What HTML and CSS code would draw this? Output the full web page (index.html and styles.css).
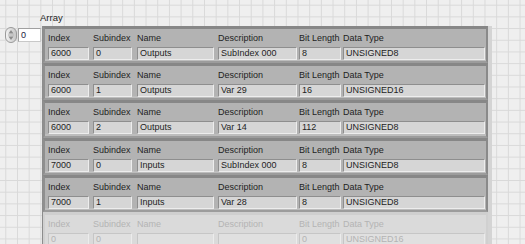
FILE: index.html
```html
<!DOCTYPE html>
<html>
<head>
<meta charset="utf-8">
<link rel="stylesheet" href="styles.css">
</head>
<body>
<div class="panel">
  <div class="array-label">Array</div>
  <div class="array-row">
    <div class="index-ctl">
      <div class="spin">
        <svg width="12" height="16" viewBox="0 0 12 16">
          <defs>
            <linearGradient id="sg" x1="0" y1="0" x2="1" y2="0">
              <stop offset="0" stop-color="#f4f4f4"/>
              <stop offset="1" stop-color="#c4c4c4"/>
            </linearGradient>
          </defs>
          <rect x="0.5" y="0.5" width="11" height="15" rx="5.5" ry="5.5" fill="url(#sg)" stroke="#9a9a9a"/>
          <path d="M6 3 L8.5 6.5 L3.5 6.5 Z" fill="#8a8a8a"/>
          <path d="M6 13 L8.5 9.5 L3.5 9.5 Z" fill="#8a8a8a"/>
          <line x1="3" y1="8" x2="9" y2="8" stroke="#b0b0b0" stroke-width="1"/>
        </svg>
      </div>
      <div class="idx-box">0</div>
    </div>
    <div class="array-frame">
      <div class="cluster">
        <div class="field f-index"><div class="lbl">Index</div><div class="val">6000</div></div>
        <div class="field f-sub"><div class="lbl">Subindex</div><div class="val">0</div></div>
        <div class="field f-name"><div class="lbl">Name</div><div class="val">Outputs</div></div>
        <div class="field f-desc"><div class="lbl">Description</div><div class="val">SubIndex 000</div></div>
        <div class="field f-bit"><div class="lbl">Bit Length</div><div class="val">8</div></div>
        <div class="field f-type"><div class="lbl">Data Type</div><div class="val">UNSIGNED8</div></div>
      </div>
      <div class="cluster">
        <div class="field f-index"><div class="lbl">Index</div><div class="val">6000</div></div>
        <div class="field f-sub"><div class="lbl">Subindex</div><div class="val">1</div></div>
        <div class="field f-name"><div class="lbl">Name</div><div class="val">Outputs</div></div>
        <div class="field f-desc"><div class="lbl">Description</div><div class="val">Var 29</div></div>
        <div class="field f-bit"><div class="lbl">Bit Length</div><div class="val">16</div></div>
        <div class="field f-type"><div class="lbl">Data Type</div><div class="val">UNSIGNED16</div></div>
      </div>
      <div class="cluster">
        <div class="field f-index"><div class="lbl">Index</div><div class="val">6000</div></div>
        <div class="field f-sub"><div class="lbl">Subindex</div><div class="val">2</div></div>
        <div class="field f-name"><div class="lbl">Name</div><div class="val">Outputs</div></div>
        <div class="field f-desc"><div class="lbl">Description</div><div class="val">Var 14</div></div>
        <div class="field f-bit"><div class="lbl">Bit Length</div><div class="val">112</div></div>
        <div class="field f-type"><div class="lbl">Data Type</div><div class="val">UNSIGNED8</div></div>
      </div>
      <div class="cluster">
        <div class="field f-index"><div class="lbl">Index</div><div class="val">7000</div></div>
        <div class="field f-sub"><div class="lbl">Subindex</div><div class="val">0</div></div>
        <div class="field f-name"><div class="lbl">Name</div><div class="val">Inputs</div></div>
        <div class="field f-desc"><div class="lbl">Description</div><div class="val">SubIndex 000</div></div>
        <div class="field f-bit"><div class="lbl">Bit Length</div><div class="val">8</div></div>
        <div class="field f-type"><div class="lbl">Data Type</div><div class="val">UNSIGNED8</div></div>
      </div>
      <div class="cluster">
        <div class="field f-index"><div class="lbl">Index</div><div class="val">7000</div></div>
        <div class="field f-sub"><div class="lbl">Subindex</div><div class="val">1</div></div>
        <div class="field f-name"><div class="lbl">Name</div><div class="val">Inputs</div></div>
        <div class="field f-desc"><div class="lbl">Description</div><div class="val">Var 28</div></div>
        <div class="field f-bit"><div class="lbl">Bit Length</div><div class="val">8</div></div>
        <div class="field f-type"><div class="lbl">Data Type</div><div class="val">UNSIGNED8</div></div>
      </div>
      <div class="cluster faded">
        <div class="field f-index"><div class="lbl">Index</div><div class="val">0</div></div>
        <div class="field f-sub"><div class="lbl">Subindex</div><div class="val">0</div></div>
        <div class="field f-name"><div class="lbl">Name</div><div class="val"></div></div>
        <div class="field f-desc"><div class="lbl">Description</div><div class="val"></div></div>
        <div class="field f-bit"><div class="lbl">Bit Length</div><div class="val">0</div></div>
        <div class="field f-type"><div class="lbl">Data Type</div><div class="val">UNSIGNED16</div></div>
      </div>
    </div>
  </div>
</div>
</body>
</html>
```
FILE: styles.css
```css
html, body {
  margin: 0;
  padding: 0;
  width: 525px;
  height: 244px;
  overflow: hidden;
}
body {
  font-family: "Liberation Sans", Arial, sans-serif;
  font-size: 9px;
  color: #1e1e1e;
  background-color: #efefef;
  background-image:
    linear-gradient(to right, #d9d9d9 1px, transparent 1px),
    linear-gradient(to bottom, #d9d9d9 1px, transparent 1px);
  background-size: 11.7px 11.7px;
  background-position: 5.3px 4.7px;
}
.panel {
  padding-top: 11px;
}
.array-label {
  margin-left: 40px;
  height: 15px;
  line-height: 13px;
  font-size: 9.5px;
}
.array-row {
  display: flex;
  align-items: flex-start;
}
.index-ctl {
  display: flex;
  align-items: center;
  margin-left: 5px;
  margin-top: 1px;
  width: 36px;
}
.spin {
  width: 12px;
  height: 16px;
}
.spin svg {
  display: block;
}
.idx-box {
  margin-left: 1px;
  width: 19px;
  height: 12px;
  line-height: 12px;
  background: #ffffff;
  border: 1px solid #c8c8c8;
  border-top-color: #a0a0a0;
  border-left-color: #a0a0a0;
  padding-left: 2px;
  box-sizing: content-box;
  color: #202040;
}
.array-frame {
  margin-left: 1px;
  width: 445px;
  border-left: 1px solid #8c8c8c;
  border-right: 4px solid #d4d4d4;
  background: #a8a8a8;
}
.cluster {
  display: flex;
  box-sizing: border-box;
  height: 37.2px;
  padding-left: 3px;
  background: #b3b3b3;
  border-top: 3px solid #878787;
  border-left: 2px solid #8f8f8f;
  border-right: 2px solid #8a8a8a;
  border-bottom: 2px solid #9c9c9c;
  box-shadow: inset 0 -2px 0 #bdbdbd;
}
.field {
  display: flex;
  flex-direction: column;
}
.lbl {
  height: 18px;
  line-height: 18px;
  white-space: nowrap;
}
.val {
  box-sizing: border-box;
  height: 13px;
  line-height: 11px;
  padding-left: 2px;
  background: #d6d6d6;
  border: 1px solid #ededed;
  border-top-color: #8e8e8e;
  border-left-color: #8e8e8e;
  white-space: nowrap;
  overflow: hidden;
}
.f-index { width: 45px; }
.f-index .val { width: 41px; }
.f-sub { width: 44px; }
.f-sub .val { width: 39px; }
.f-name { width: 81px; }
.f-name .val { width: 77px; }
.f-desc { width: 81px; }
.f-desc .val { width: 79px; }
.f-bit { width: 44px; }
.f-bit .val { width: 42px; }
.f-type { width: 142px; }
.f-type .val { width: 142px; }

.cluster.faded {
  background: #dadada;
  border-top-color: #cfcfcf;
  border-left-color: #d0d0d0;
  border-right-color: #d0d0d0;
  color: #b4b4b4;
  box-shadow: none;
}
.cluster.faded .val {
  background: #e0e0e0;
  border-top-color: #c6c6c6;
  border-left-color: #c6c6c6;
  border-right-color: #ececec;
  border-bottom-color: #ececec;
}
```
